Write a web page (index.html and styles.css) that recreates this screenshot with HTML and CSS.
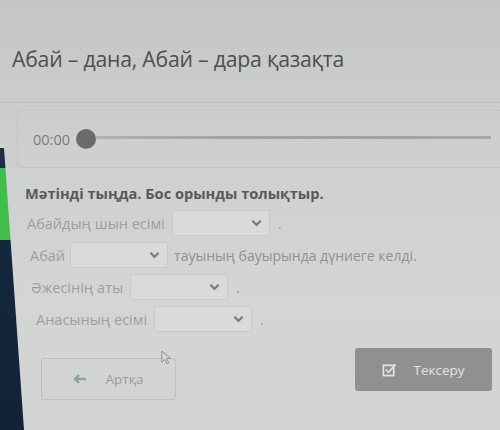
FILE: index.html
```html
<!DOCTYPE html>
<html lang="kk">
<head>
  <meta charset="UTF-8" />
  <meta name="viewport" content="width=device-width, initial-scale=1.0" />
  <title>Абай – дана, Абай – дара қазақта</title>
  <link rel="stylesheet" href="styles.css">
</head>
<body>
  <div class="edge"></div>

  <div class="page">
    <header class="lesson-header">
      <h1>Абай – дана, Абай – дара қазақта</h1>
    </header>

    <main class="task">
      <!-- Audio player -->
      <div class="player">
        <span class="time">00:00</span>
        <span class="knob"></span>
        <span class="track"></span>
      </div>

      <h2 class="task-title">Мәтінді тыңда. Бос орынды толықтыр.</h2>

      <div class="rows">
        <div class="row row-1">
          <span>Абайдың шын есімі</span>
          <div class="select"><svg viewBox="0 0 12 8"><path d="M1.5 1.5 L6 6 L10.5 1.5" /></svg></div>
          <span class="dot">.</span>
        </div>
        <div class="row row-2">
          <span>Абай</span>
          <div class="select"><svg viewBox="0 0 12 8"><path d="M1.5 1.5 L6 6 L10.5 1.5" /></svg></div>
          <span class="after">тауының бауырында дүниеге келді.</span>
        </div>
        <div class="row row-3">
          <span>Әжесінің аты</span>
          <div class="select"><svg viewBox="0 0 12 8"><path d="M1.5 1.5 L6 6 L10.5 1.5" /></svg></div>
          <span class="dot">.</span>
        </div>
        <div class="row row-4">
          <span>Анасының есімі</span>
          <div class="select"><svg viewBox="0 0 12 8"><path d="M1.5 1.5 L6 6 L10.5 1.5" /></svg></div>
          <span class="dot">.</span>
        </div>
      </div>

      <div class="actions">
        <button class="btn back">
          <svg class="arrow" viewBox="0 0 14 10"><path d="M13 5 H3 M6 1 L2 5 L6 9" /></svg>
          Артқа
          <svg class="cursor" viewBox="0 0 12 16"><path d="M1 1 L1 13 L4 10 L6.5 15 L8.5 14 L6 9 L10.5 9 Z" /></svg>
        </button>
        <button class="btn check">
          <svg class="tick" viewBox="0 0 16 16"><rect x="1.5" y="3.5" width="11" height="11" /><path d="M4 8 L7 11 L14.5 2.5" /></svg>
          Тексеру
        </button>
      </div>
    </main>
  </div>
</body>
</html>
```

FILE: styles.css
```css
/* Global Styles */
* {
  margin: 0;
  padding: 0;
  box-sizing: border-box;
  font-family: 'Open Sans', 'Noto Sans', sans-serif;
}

body {
  width: 500px;
  height: 430px;
  overflow: hidden;
  position: relative;
  background: linear-gradient(180deg, #c4c6c5 0%, #cdcfce 30%, #d4d6d5 70%, #d2d4d3 100%);
  color: #555;
}

/* Screen edge on the left */
.edge {
  position: absolute;
  left: 0;
  top: 148px;
  bottom: 0;
  width: 24px;
  background: linear-gradient(180deg, #1d2f45 0, #1d2f45 20px, #3fbf4a 20px, #3fbf4a 92px, #15273d 92px, #122338 100%);
  clip-path: polygon(0 0, 4px 0, 24px 100%, 0 100%);
}

/* Header */
.lesson-header {
  padding: 44px 0 0 12px;
  height: 102px;
}

.lesson-header h1 {
  font-size: 21.2px;
  font-weight: 400;
  color: #4e4f4f;
  letter-spacing: -0.2px;
}

/* Task */
.task {
  border-top: 1px solid #bfc1c0;
  padding-top: 7px;
}

.player {
  display: flex;
  align-items: center;
  height: 58px;
  margin-left: 17px;
  margin-right: -10px;
  padding-left: 15px;
  border: 1px solid #c3c5c4;
  border-radius: 3px;
}

.player .time {
  font-size: 14.5px;
  color: #7a7b7b;
}

.player .knob {
  width: 20px;
  height: 20px;
  border-radius: 50%;
  background: #6a6b6b;
  margin-left: 6px;
}

.player .track {
  flex: 1;
  height: 3px;
  margin-right: 18px;
  margin-top: -3px;
  background: linear-gradient(90deg, #b0b2b1 0%, #a3a5a4 30%, #a0a2a1 60%, #a6a8a7 100%);
}

.task-title {
  font-size: 14.6px;
  font-weight: 700;
  color: #585959;
  margin: 15px 0 0 25px;
}

/* Fill-in rows */
.rows {
  display: flex;
  flex-direction: column;
  gap: 6px;
  margin-top: 7px;
}

.row {
  display: flex;
  align-items: center;
  font-size: 14.5px;
  color: #9c9e9d;
}

.row-1 { padding-left: 27px; }
.row-2 { padding-left: 30px; }
.row-3 { padding-left: 31px; }
.row-4 { padding-left: 36px; }

.select {
  width: 98px;
  height: 26px;
  margin-left: 7px;
  border: 1px solid #c8cac9;
  border-radius: 2px;
  background: #d9dbda;
  display: flex;
  align-items: center;
  justify-content: flex-end;
  padding-right: 7px;
}

.row-2 .select {
  margin-left: 5px;
}

.select svg {
  width: 11px;
  height: 8px;
  fill: none;
  stroke: #7b7d7c;
  stroke-width: 2.4;
}

.row .dot {
  margin-left: 8px;
}

.row .after {
  margin-left: 6px;
  font-size: 14px;
  color: #8f9190;
}

/* Buttons */
.actions {
  display: flex;
  justify-content: space-between;
  align-items: flex-start;
  margin-top: 21px;
  padding: 0 8px 0 41px;
}

.btn {
  display: flex;
  align-items: center;
  justify-content: center;
  gap: 16px;
  font-size: 13.5px;
  border-radius: 3px;
  position: relative;
}

.btn.back {
  width: 135px;
  height: 42px;
  margin-top: 5px;
  background: transparent;
  border: 1px solid #bfc1c0;
  color: #9a9c9b;
  gap: 18px;
}

.btn.back .arrow {
  width: 14px;
  height: 10px;
  fill: none;
  stroke: #8ea1a6;
  stroke-width: 2.4;
}

.btn.back .cursor {
  position: absolute;
  right: 3px;
  top: -9px;
  width: 11px;
  height: 15px;
  fill: #d7d9d8;
  stroke: #8a8c8b;
  stroke-width: 1;
}

.btn.check {
  width: 137px;
  height: 43px;
  margin-top: -5px;
  border: none;
  background: #8f9190;
  color: #e2e4e3;
}

.btn.check .tick {
  width: 15px;
  height: 15px;
  fill: none;
  stroke: #e2e4e3;
  stroke-width: 1.8;
}
```
